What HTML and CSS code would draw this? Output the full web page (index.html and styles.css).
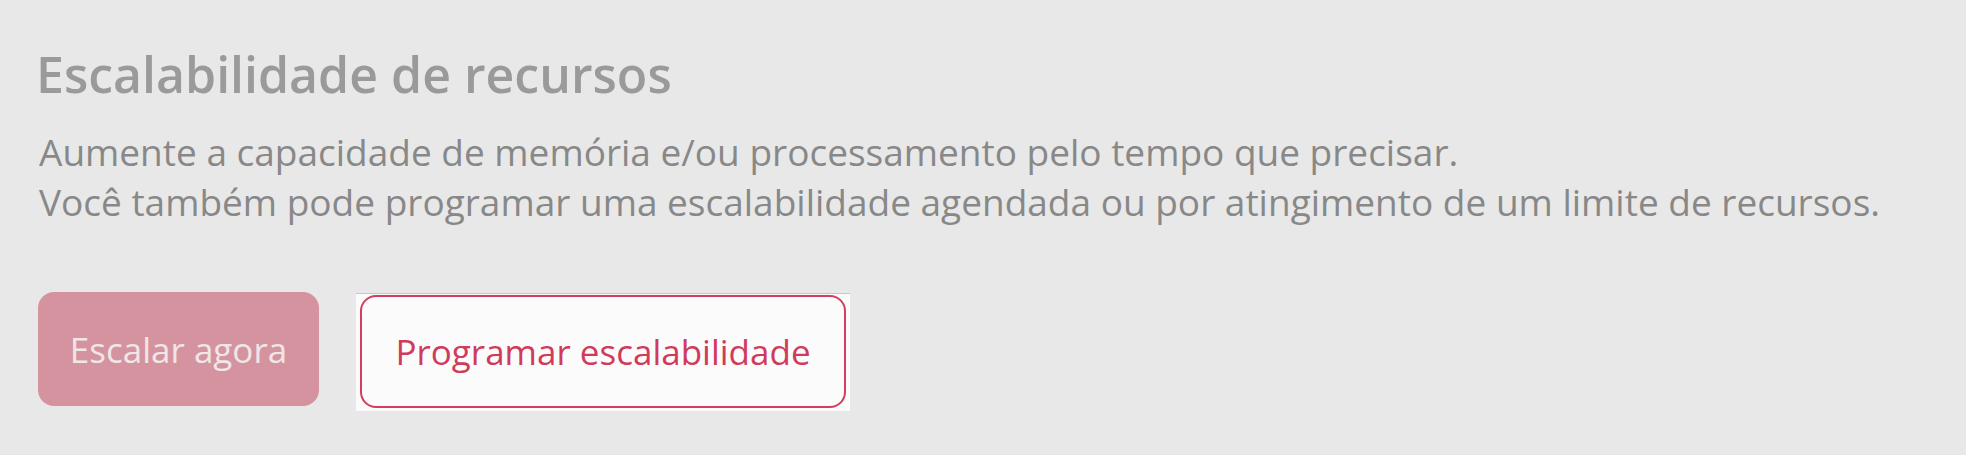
FILE: index.html
```html
<!DOCTYPE html>
<html>
    <head>
    <meta charset="utf-8">
    <meta name="viewport" content="width=device-width, initial-scale=1.0">
    <title>Escalabilidade de recursos</title>
    <link rel="stylesheet" href="styles.css">
    </head>

    <body>
    <div class="scale">
        <h2 class="title">Escalabilidade de recursos</h2>
        <p class="desc">Aumente a capacidade de memória e/ou processamento pelo tempo que precisar.<br>Você também pode programar uma escalabilidade agendada ou por atingimento de um limite de recursos.</p>
        <div class="actions">
            <button class="btn btn-now" disabled>Escalar agora</button>
            <div class="btn-wrap">
                <button class="btn btn-plan">Programar escalabilidade</button>
            </div>
        </div>
    </div>
    </body>
</html>
```

FILE: styles.css
```css
body {
    padding: 0;
    margin: 0;
    background-color: #e8e8e8;
    font-family: "Open Sans", "Liberation Sans", sans-serif;
}
.scale{
    padding: 40px 0 0 36px;
}
.title{
    margin: 0;
    font-size: 50px;
    line-height: 68px;
    font-weight: 600;
    color: #9a9a9a;
}
.desc{
    margin: 19px 0 0 3px;
    font-size: 37px;
    line-height: 50px;
    color: #888888;
}
.actions{
    display: flex;
    align-items: flex-start;
    gap: 37px;
    margin-top: 65px;
    margin-left: 2px;
}
.btn{
    font-family: "Open Sans", "Liberation Sans", sans-serif;
    font-size: 35px;
    font-weight: 500;
    border-radius: 16px;
    cursor: pointer;
}
.btn-now{
    width: 281px;
    height: 114px;
    border: none;
    background-color: #d5939f;
    color: #efe6e7;
}
.btn-wrap{
    margin-top: 1px;
    padding: 1px 4px 3px 4px;
    background-color: #fbfbfb;
    border-top: 1px solid #e2bcc5;
}
.btn-plan{
    width: 486px;
    height: 113px;
    border: 2px solid #d43d5e;
    background-color: #fbfbfb;
    color: #d13b5b;
}
```
